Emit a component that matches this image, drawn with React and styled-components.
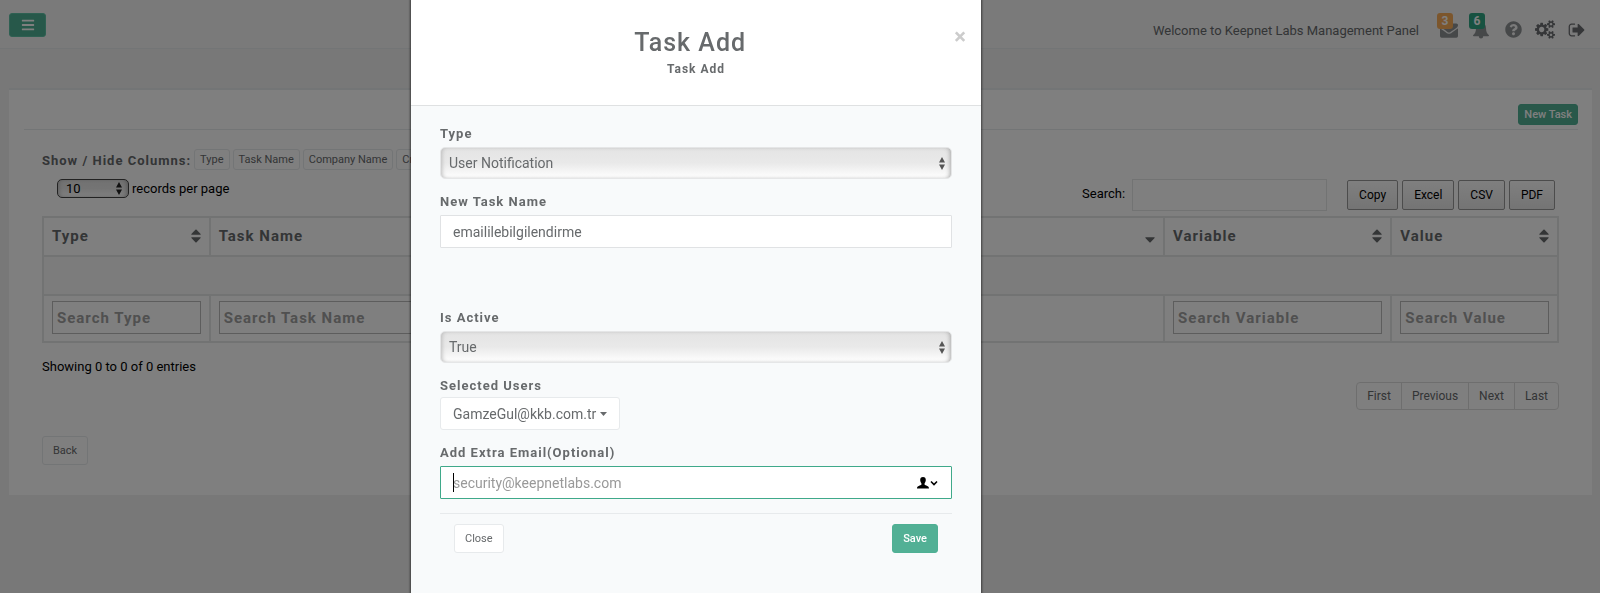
import React from "react";
import styled, { createGlobalStyle, css } from "styled-components";
import { FaQuestionCircle, FaBars } from "react-icons/fa";

const GlobalStyle = createGlobalStyle`
  *, *::before, *::after { box-sizing: border-box; }
  body {
    margin: 0;
    background: #f1f1f1;
    color: #676a6c;
    font-family: Roboto, "Liberation Sans", sans-serif;
    font-size: 13px;
    line-height: 18px;
  }
  button, input, select { font: inherit; color: inherit; margin: 0; }
  h1, h2, p { margin: 0; }
`;

/* ---------- shared parts ---------- */

const Button = styled.button`
  display: inline-flex;
  align-items: center;
  justify-content: center;
  height: ${(p) => p.$height || 29}px;
  padding: 0 ${(p) => p.$pad || 10}px;
  border: 1px solid #e7eaec;
  border-radius: 3px;
  background: #fff;
  font-size: 11px;
  white-space: nowrap;
  ${(p) =>
    p.$primary &&
    css`
      border-color: #4fb094;
      background: #52b095;
      color: #fff;
      font-weight: 500;
    `}
`;

const Rule = styled.hr`
  width: 100%;
  margin: 0;
  border: 0;
  border-top: 1px solid #e7eaec;
`;

/* ---------- top bar ---------- */

const TopBar = styled.header`
  display: flex;
  align-items: center;
  justify-content: space-between;
  height: 49px;
  padding: 1px 13px 0 9px;
  border-bottom: 1px solid #e7eaec;
  background: #f4f4f4;
`;

const MenuButton = styled.button`
  display: flex;
  align-items: center;
  justify-content: center;
  width: 37px;
  height: 24px;
  padding: 0;
  border: 1px solid #5cc0a5;
  border-radius: 3px;
  background: #4fb094;
  color: #fff;
`;

const TopLinks = styled.nav`
  display: flex;
  align-items: center;
  height: 100%;
  padding-top: 10px;
`;

const Welcome = styled.span`
  margin-right: 8px;
  padding-top: 3px;
`;

const IconLink = styled.a`
  position: relative;
  display: flex;
  justify-content: center;
  width: 20px;
  margin-left: 12px;
  color: ${(p) => (p.$dark ? "#6a6d70" : "#8d9092")};
`;

const Badge = styled.span`
  position: absolute;
  top: -8px;
  left: -2px;
  width: 16px;
  height: 16px;
  border-radius: 3px;
  background: ${(p) => p.$color};
  color: #fff;
  font-size: 12px;
  font-weight: 700;
  line-height: 16px;
  text-align: center;
`;

/* ---------- card ---------- */

const Card = styled.main`
  margin: 39px 8px 0 9px;
  padding: 14px 14px 30px 15px;
  border-top: 2px solid #e7eaec;
  background: #fff;
`;

const CardTools = styled.div`
  display: flex;
  justify-content: flex-end;
  padding-bottom: 4px;
`;

const CardBody = styled.div`
  display: flex;
  flex-direction: column;
  padding: 19px 19px 0 18px;
`;

const ColumnToggles = styled.div`
  display: flex;
  align-items: center;
  gap: 3px;
  height: 21px;
`;

const ToggleTitle = styled.span`
  padding-top: 3px;
  font-weight: 700;
  letter-spacing: 1px;
`;

const Controls = styled.div`
  display: flex;
  align-items: flex-start;
  justify-content: space-between;
  padding: 9px 4px 5px 15px;
  color: #000;
`;

const Inline = styled.div`
  display: flex;
  align-items: center;
  gap: ${(p) => p.$gap}px;
`;

const SearchLabel = styled.label`
  display: flex;
  align-items: center;
  gap: 7px;
  height: 32px;
  margin-right: 16px;
  padding-bottom: 2px;
`;

const SearchInput = styled.input`
  width: 195px;
  height: 32px;
  margin-top: 2px;
  border: 1px solid #e5e6e7;
  background: #fff;
`;

const ExportButton = styled(Button)`
  height: 30px;
  padding: 0 11px;
  border: 1px solid #999;
  border-radius: 2px;
  background: linear-gradient(#fff, #e9e9e9);
  color: #000;
  font-size: 12px;
`;

const Table = styled.table`
  width: 100%;
  table-layout: fixed;
  border-collapse: collapse;
  border: 2px solid #e5e6e7;
  font-size: 15px;

  th, td {
    height: 39px;
    padding: 0 8px;
    border: 2px solid #e5e6e7;
    text-align: left;
  }
  th { padding-bottom: 2px; }
  tbody td { background: #f9f9f9; }
  tfoot td { height: 47px; padding-bottom: 2px; }
`;

const HeadCell = styled.div`
  display: flex;
  align-items: center;
  justify-content: space-between;
  font-weight: 700;
  letter-spacing: 1px;
`;

const FilterInput = styled.input`
  display: block;
  width: 100%;
  height: 33px;
  padding: 0 4px;
  border: 1px solid #bbb;
  background: #fff;
  font-weight: 700;
  letter-spacing: 1px;
  &::placeholder { color: #a0a0a0; opacity: 1; }
`;

const Info = styled.p`
  padding-top: 15px;
  color: #000;
`;

const Pager = styled.div`
  display: flex;
  align-self: flex-end;
  margin-top: 6px;
`;

const PageButton = styled(Button)`
  height: 28px;
  font-size: 12px;
  border-color: #ddd;
  border-radius: 0;
  & + & { margin-left: -1px; }
  &:first-child { border-radius: 4px 0 0 4px; }
  &:last-child { border-radius: 0 4px 4px 0; }
`;

const BackRow = styled.div`
  padding-top: 26px;
`;

/* ---------- select ---------- */

const SelectBox = styled.div`
  position: relative;
  width: ${(p) => (p.$small ? "72px" : "100%")};
`;

const Select = styled.select`
  display: block;
  appearance: none;
  width: 100%;
  height: ${(p) => (p.$small ? 19 : 32)}px;
  padding: 0 8px;
  border: 1px solid ${(p) => (p.$small ? "#444" : "#e5e6e7")};
  border-radius: 5px;
  background: linear-gradient(#e4e4e4, #e9e9e9 50%, #fff);
  box-shadow: inset 3px 0 4px -2px #bbb, inset -3px 0 4px -2px #aaa;
  font-size: ${(p) => (p.$small ? 13 : 14)}px;
`;

const SelectArrows = styled.svg`
  position: absolute;
  top: 0;
  bottom: 0;
  right: 7px;
  margin: auto 0;
  pointer-events: none;
`;

/* ---------- modal ---------- */

const Backdrop = styled.div`
  position: fixed;
  inset: 0;
  display: flex;
  justify-content: center;
  padding-right: 13%;
  background: rgba(0, 0, 0, 0.5);
  overflow: hidden;
`;

const Modal = styled.section`
  display: flex;
  flex-direction: column;
  width: 570px;
  min-height: 100%;
  background: #f8fafb;
  box-shadow: 0 0 2px 1px rgba(0, 0, 0, 0.5);
`;

const ModalHeader = styled.header`
  height: 106px;
  padding: 25px 15px 0;
  border-bottom: 1px solid #dfe1e2;
  background: #fff;
  text-align: center;
`;

const CloseIcon = styled.button`
  float: right;
  padding: 0;
  border: 0;
  background: none;
  color: #ccc;
  font-size: 22px;
  font-weight: 700;
  line-height: 24px;
`;

const Title = styled.h1`
  font-size: 25px;
  font-weight: 500;
  line-height: 36px;
  letter-spacing: 1px;
`;

const Subtitle = styled.h2`
  font-size: 12px;
  font-weight: 700;
  line-height: 16px;
  letter-spacing: 1px;
`;

const Form = styled.form`
  display: flex;
  flex-direction: column;
  padding: 19px 29px 40px;
`;

const Field = styled.div`
  display: flex;
  flex-direction: column;
  align-items: flex-start;
  margin-bottom: ${(p) => (p.$spaced ? 61 : 14)}px;
`;

const Label = styled.label`
  margin-bottom: ${(p) => (p.$tight ? 2 : 4)}px;
  font-weight: 700;
  letter-spacing: 1px;
`;

const TextInput = styled.input`
  display: block;
  width: 100%;
  height: 33px;
  padding: 0 12px;
  border: 1px solid ${(p) => (p.$active ? "#3fa98a" : "#e0e2e4")};
  border-radius: 1px;
  background: #fff;
  font-size: 14px;
  outline: none;
  &::placeholder { color: #999; opacity: 1; }
`;

const InputBox = styled.div`
  position: relative;
  width: 100%;
`;

const Caret = styled.span`
  position: absolute;
  top: 7px;
  left: 13px;
  width: 1px;
  height: 19px;
  background: #000;
`;

const ContactIcon = styled.svg`
  position: absolute;
  top: 11px;
  right: 14px;
`;

const UserButton = styled(Button)`
  gap: 4px;
  font-size: 14px;
`;

const Actions = styled.div`
  display: flex;
  justify-content: space-between;
  padding: 10px 14px 0;
`;

/* ---------- icons ---------- */

const EnvelopeIcon = () => (
  <svg width="18" height="18" viewBox="0 0 1792 1792" fill="currentColor" aria-hidden="true">
    <path d="M1792 710v794q0 66-47 113t-113 47h-1472q-66 0-113-47t-47-113v-794q44 49 101 87 362 246 497 345 57 42 92.5 65.5t94.5 48 110 24.5h2q51 0 110-24.5t94.5-48 92.5-65.5q170-123 498-345 57-39 100-87zm0-294q0 79-49 151t-122 123q-376 261-468 325-10 7-42.5 31t-54 38.5-52 32.5-57.5 27-50 9h-2q-23 0-50-9t-57.5-27-52-32.5-54-38.5-42.5-31q-91-64-262-182.5t-205-142.5q-62-42-117-115.5t-55-136.5q0-78 41.5-130t118.5-52h1472q65 0 112.5 47t47.5 113z" />
  </svg>
);

const BellIcon = () => (
  <svg width="18" height="18" viewBox="0 0 18 18" fill="currentColor" aria-hidden="true">
    <path d="M9 .5c.7 0 1.100.5 1 1.200C12.500 2.200 14 4.200 14 7c0 3.800 1 5.700 3 7.200 0 .7-.5 1.100-1.100 1.100H11.200a2.200 2.200 0 0 1-4.400 0H2.100C1.500 15.300 1 14.900 1 14.200 3 12.700 4 10.800 4 7c0-2.800 1.500-4.800 4-5.300C7.900 1 8.300.5 9 .5z" />
  </svg>
);

const CogsIcon = () => (
  <svg width="20" height="19" viewBox="0 0 1920 1792" fill="currentColor" aria-hidden="true">
    <path d="M896 896q0-106-75-181t-181-75-181 75-75 181 75 181 181 75 181-75 75-181zm768 512q0-52-38-90t-90-38-90 38-38 90q0 53 37.5 90.5t90.5 37.5 90.5-37.5 37.5-90.5zm0-1024q0-52-38-90t-90-38-90 38-38 90q0 53 37.5 90.5t90.5 37.5 90.5-37.5 37.5-90.5zm-384 421v185q0 10-7 19.5t-16 10.5l-155 24q-11 35-32 76 34 48 90 115 7 11 7 20 0 12-7 19-23 30-82.5 89.5t-78.5 59.5q-11 0-21-7l-115-90q-37 19-77 31-11 108-23 155-7 24-30 24h-186q-11 0-20-7.5t-10-17.5l-23-153q-34-10-75-31l-118 89q-7 7-20 7-11 0-21-8-144-133-144-160 0-9 7-19 10-14 41-53t47-61q-23-44-35-82l-152-24q-10-1-17-9.500t-7-19.500v-185q0-10 7-19.500t16-10.500l155-24q11-35 32-76-34-48-90-115-7-11-7-20 0-12 7-20 22-30 82-89t79-59q11 0 21 7l115 90q34-18 77-32 11-108 23-154 7-24 30-24h186q11 0 20 7.500t10 17.500l23 153q34 10 75 31l118-89q8-7 20-7 11 0 21 8 144 133 144 160 0 8-7 19-12 16-42 54t-45 60q23 48 34 82l152 23q10 2 17 10.500t7 19.500zm640 533v140q0 16-149 31-12 27-30 52 51 113 51 138 0 4-4 7-122 71-124 71-8 0-46-47t-52-68q-20 2-30 2t-30-2q-14 21-52 68t-46 47q-2 0-124-71-4-3-4-7 0-25 51-138-18-25-30-52-149-15-149-31v-140q0-16 149-31 13-29 30-52-51-113-51-138 0-4 4-7 4-2 35-20t59-34 30-16q8 0 46 46.500t52 67.500q20-2 30-2t30 2q51-71 92-112l6-2q4 0 124 70 4 3 4 7 0 25-51 138 17 23 30 52 149 15 149 31zm0-1024v140q0 16-149 31-12 27-30 52 51 113 51 138 0 4-4 7-122 71-124 71-8 0-46-47t-52-68q-20 2-30 2t-30-2q-14 21-52 68t-46 47q-2 0-124-71-4-3-4-7 0-25 51-138-18-25-30-52-149-15-149-31v-140q0-16 149-31 13-29 30-52-51-113-51-138 0-4 4-7 4-2 35-20t59-34 30-16q8 0 46 46.500t52 67.500q20-2 30-2t30 2q51-71 92-112l6-2q4 0 124 70 4 3 4 7 0 25-51 138 17 23 30 52 149 15 149 31z" />
  </svg>
);

const SignOutIcon = () => (
  <svg width="18" height="18" viewBox="0 0 1664 1792" fill="currentColor" aria-hidden="true">
    <path d="M640 1440q0 4 1 20t.5 26.500-3 23.500-10 19.500-20.500 6.500h-320q-119 0-203.500-84.500t-84.500-203.500v-704q0-119 84.500-203.500t203.500-84.500h320q13 0 22.500 9.500t9.500 22.500q0 4 1 20t.5 26.500-3 23.500-10 19.500-20.500 6.500h-320q-66 0-113 47t-47 113v704q0 66 47 113t113 47h312l11.500 1 11.500 3 8 5.500 7 9 2 13.500zm928-544q0 26-19 45l-544 544q-19 19-45 19t-45-19-19-45v-288h-448q-26 0-45-19t-19-45v-384q0-26 19-45t45-19h448v-288q0-26 19-45t45-19 45 19l544 544q19 19 19 45z" />
  </svg>
);

const SortIcon = ({ desc }) => (
  <svg width="10" height="14" viewBox="0 0 10 14" fill="currentColor" aria-hidden="true">
    {!desc && <path d="M.6 5.800h8.800q.6-.3.200-.9L5.600.7Q5 .2 4.400.7L.4 4.900q-.4.600.2.900z" />}
    <path d="M.6 8.200h8.800q.6.300.2.900L5.600 13.300q-.6.500-1.200 0L.4 9.100q-.4-.6.200-.9z" />
  </svg>
);

const DropCaret = () => (
  <svg width="7" height="4" viewBox="0 0 7 4" fill="currentColor" aria-hidden="true">
    <path d="M0 0h7L3.500 4z" />
  </svg>
);

function Dropdown({ id, small, children }) {
  return (
    <SelectBox $small={small}>
      <Select id={id} $small={small}>{children}</Select>
      <SelectArrows width="6" height="13" viewBox="0 0 6 13" fill={small ? "#222" : "#555"}>
        <path d="M3 0l3 5.500H0zM3 13l3-5.500H0z" />
      </SelectArrows>
    </SelectBox>
  );
}

/* ---------- page ---------- */

const toggles = ["Type", "Task Name", "Company Name", "Created"];
const columns = [
  { name: "Type", width: "11%" },
  { name: "Task Name", width: "28%" },
  { name: "", width: "35%", desc: true },
  { name: "Variable", width: "15%" },
  { name: "Value", width: "11%" },
];

export default function App() {
  return (
    <>
      <GlobalStyle />
      <TopBar>
        <MenuButton aria-label="Menu"><FaBars size={14} /></MenuButton>
        <TopLinks>
          <Welcome>Welcome to Keepnet Labs Management Panel</Welcome>
          <IconLink href="#messages" aria-label="Messages">
            <EnvelopeIcon />
            <Badge $color="#f8ac59">3</Badge>
          </IconLink>
          <IconLink href="#alerts" aria-label="Alerts">
            <BellIcon />
            <Badge $color="#2fa583">6</Badge>
          </IconLink>
          <IconLink href="#help" aria-label="Help"><FaQuestionCircle size={17} /></IconLink>
          <IconLink href="#settings" aria-label="Settings" $dark><CogsIcon /></IconLink>
          <IconLink href="#logout" aria-label="Log out" $dark><SignOutIcon /></IconLink>
        </TopLinks>
      </TopBar>

      <Card>
        <CardTools>
          <Button $primary $height={21} $pad={5}>New Task</Button>
        </CardTools>
        <Rule />
        <CardBody>
          <ColumnToggles>
            <ToggleTitle>Show / Hide Columns:</ToggleTitle>
            {toggles.map((t) => (
              <Button key={t} $height={21} $pad={5}>{t}</Button>
            ))}
          </ColumnToggles>
          <Controls>
            <Inline $gap={3}>
              <Dropdown id="page-size" small><option>10</option></Dropdown>
              <label htmlFor="page-size">records per page</label>
            </Inline>
            <Inline $gap={4}>
              <SearchLabel>
                Search:
                <SearchInput type="search" />
              </SearchLabel>
              {["Copy", "Excel", "CSV", "PDF"].map((t) => (
                <ExportButton key={t}>{t}</ExportButton>
              ))}
            </Inline>
          </Controls>
          <Table>
            <colgroup>
              {columns.map((c, i) => <col key={i} style={{ width: c.width }} />)}
            </colgroup>
            <thead>
              <tr>
                {columns.map((c, i) => (
                  <th key={i}><HeadCell><span>{c.name}</span><SortIcon desc={c.desc} /></HeadCell></th>
                ))}
              </tr>
            </thead>
            <tbody><tr><td colSpan={5} /></tr></tbody>
            <tfoot>
              <tr>
                {columns.map((c, i) => (
                  <td key={i}>
                    {c.name && <FilterInput aria-label={"Search " + c.name} placeholder={"Search " + c.name} />}
                  </td>
                ))}
              </tr>
            </tfoot>
          </Table>
          <Info>Showing 0 to 0 of 0 entries</Info>
          <Pager>
            {["First", "Previous", "Next", "Last"].map((t) => <PageButton key={t}>{t}</PageButton>)}
          </Pager>
          <BackRow><Button>Back</Button></BackRow>
        </CardBody>
      </Card>

      <Backdrop>
        <Modal role="dialog" aria-modal="true" aria-labelledby="modal-title">
          <ModalHeader>
            <CloseIcon aria-label="Close">×</CloseIcon>
            <Title id="modal-title">Task Add</Title>
            <Subtitle>Task Add</Subtitle>
          </ModalHeader>
          <Form>
            <Field>
              <Label htmlFor="type">Type</Label>
              <Dropdown id="type"><option>User Notification</option></Dropdown>
            </Field>
            <Field $spaced>
              <Label htmlFor="name">New Task Name</Label>
              <TextInput id="name" defaultValue="emaililebilgilendirme" />
            </Field>
            <Field>
              <Label htmlFor="active">Is Active</Label>
              <Dropdown id="active"><option>True</option></Dropdown>
            </Field>
            <Field>
              <Label htmlFor="users" $tight>Selected Users</Label>
              <UserButton id="users" type="button" $height={33} $pad={12}>
                GamzeGul@kkb.com.tr <DropCaret />
              </UserButton>
            </Field>
            <Field>
              <Label htmlFor="extra">Add Extra Email(Optional)</Label>
              <InputBox>
                <TextInput id="extra" $active placeholder="security@keepnetlabs.com" />
                <Caret />
                <ContactIcon width="21" height="12" viewBox="0 0 21 12" aria-hidden="true">
                  <path d="M6 0c2 0 2.800 1.200 2.800 3 0 1.500-.8 2.500-1.200 3.300v1.500C8.500 8.600 12 8.800 12 11.500H0C0 8.800 3.500 8.600 4.400 7.800V6.300C4 5.500 3.200 4.500 3.200 3 3.200 1.200 4 0 6 0z" />
                  <path d="M14 4.500l3 3 3-3" fill="none" stroke="#000" strokeWidth="1.600" />
                </ContactIcon>
              </InputBox>
            </Field>
            <Rule />
            <Actions>
              <Button type="button">Close</Button>
              <Button type="button" $primary>Save</Button>
            </Actions>
          </Form>
        </Modal>
      </Backdrop>
    </>
  );
}
